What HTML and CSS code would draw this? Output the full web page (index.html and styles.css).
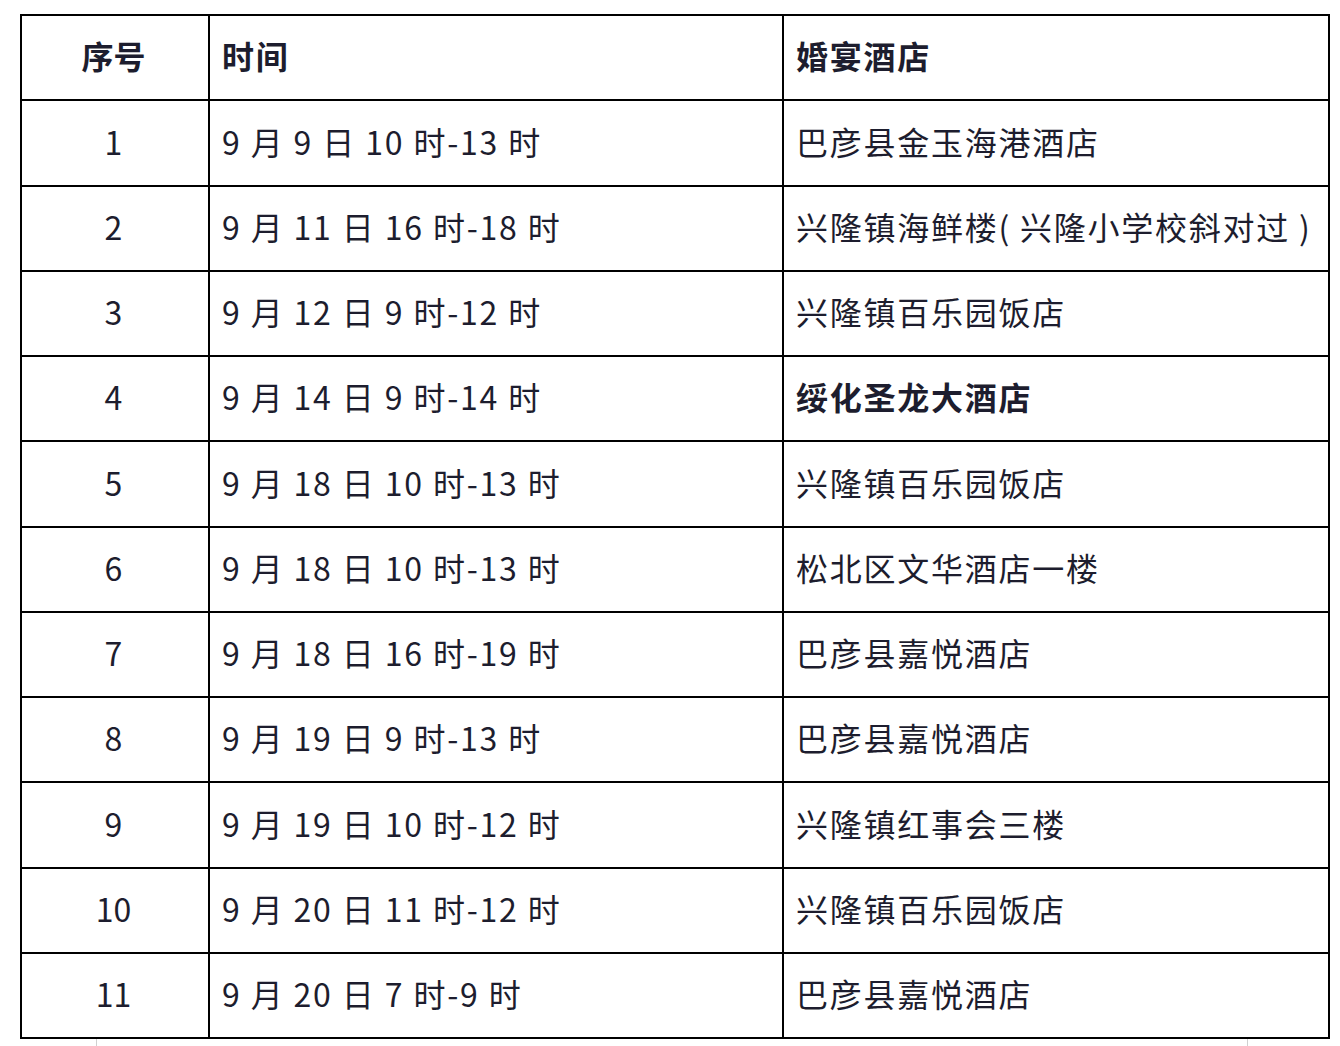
FILE: index.html
```html
<!DOCTYPE html>
<html lang="zh">
<head>
<meta charset="utf-8">
<link rel="stylesheet" href="styles.css">
</head>
<body>
<div class="page">
<table class="sched">
<colgroup><col class="c1"><col class="c2"><col class="c3"></colgroup>
<thead>
<tr><th class="num">序号</th><th>时间</th><th>婚宴酒店</th></tr>
</thead>
<tbody>
<tr><td class="num">1</td><td class="time">9 月 9 日 10 时-13 时</td><td>巴彦县金玉海港酒店</td></tr>
<tr><td class="num">2</td><td class="time">9 月 11 日 16 时-18 时</td><td>兴隆镇海鲜楼( 兴隆小学校斜对过 )</td></tr>
<tr><td class="num">3</td><td class="time">9 月 12 日 9 时-12 时</td><td>兴隆镇百乐园饭店</td></tr>
<tr><td class="num">4</td><td class="time">9 月 14 日 9 时-14 时</td><td class="bold">绥化圣龙大酒店</td></tr>
<tr><td class="num">5</td><td class="time">9 月 18 日 10 时-13 时</td><td>兴隆镇百乐园饭店</td></tr>
<tr><td class="num">6</td><td class="time">9 月 18 日 10 时-13 时</td><td>松北区文华酒店一楼</td></tr>
<tr><td class="num">7</td><td class="time">9 月 18 日 16 时-19 时</td><td>巴彦县嘉悦酒店</td></tr>
<tr><td class="num">8</td><td class="time">9 月 19 日 9 时-13 时</td><td>巴彦县嘉悦酒店</td></tr>
<tr><td class="num">9</td><td class="time">9 月 19 日 10 时-12 时</td><td>兴隆镇红事会三楼</td></tr>
<tr><td class="num">10</td><td class="time">9 月 20 日 11 时-12 时</td><td>兴隆镇百乐园饭店</td></tr>
<tr><td class="num">11</td><td class="time">9 月 20 日 7 时-9 时</td><td>巴彦县嘉悦酒店</td></tr>
</tbody>
</table>
<div class="ticks"><span class="tick"></span><span class="tick"></span></div>
</div>
</body>
</html>
```
FILE: styles.css
```css
html, body {
  margin: 0;
  padding: 0;
  background: #ffffff;
}
.page {
  padding: 14px 0 0 20px;
  width: 1310px;
}
.sched {
  border-collapse: collapse;
  table-layout: fixed;
  width: 1308px;
  font-family: "Noto Sans CJK SC", "Noto Sans", sans-serif;
  font-size: 32px;
  letter-spacing: 1.75px;
  color: #1d1d2e;
}
.c1 { width: 188px; }
.c2 { width: 574px; }
.c3 { width: 546px; }
.sched th, .sched td {
  border: 2px solid #000;
  height: 79.25px;
  padding: 0 0 4px 12px;
  text-align: left;
  vertical-align: middle;
  white-space: nowrap;
  font-weight: 400;
  line-height: 1.2;
}
.sched th {
  font-weight: 700;
}
.sched .num {
  text-align: center;
  padding: 0 3px 4px 0;
  letter-spacing: 0;
}
.sched .time {
  word-spacing: 0.25px;
}
.sched .bold {
  font-weight: 700;
}
.ticks {
  display: flex;
  justify-content: space-between;
  width: 1152px;
  margin-left: 76px;
  height: 8px;
}
.tick {
  width: 1px;
  height: 8px;
  background: #d0d0d0;
}
```
